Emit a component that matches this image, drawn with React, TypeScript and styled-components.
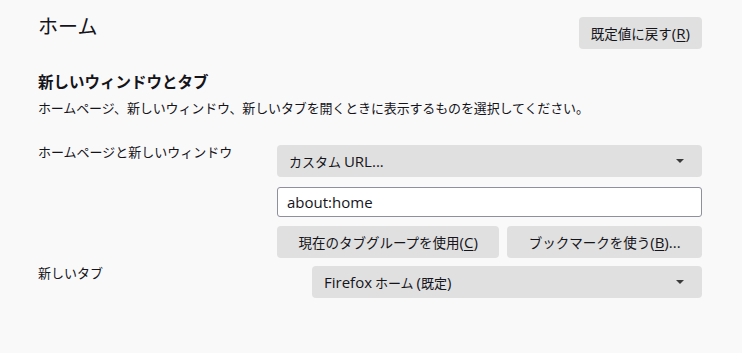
import React from "react";
import styled, { createGlobalStyle } from "styled-components";

const Global = createGlobalStyle`
  html, body { margin: 0; padding: 0; background: #f9f9f9; }
  body {
    font-family: "Open Sans", "Noto Sans CJK JP", sans-serif;
    color: #15141a;
  }
`;

const Page = styled.div`
  width: 742px;
  height: 353px;
  box-sizing: border-box;
  padding: 17px 40px 0 38px;
  background: #f9f9f9;
`;

const Header = styled.div`
  display: flex;
  justify-content: space-between;
  align-items: flex-start;
`;

const Title = styled.h1`
  margin: 0;
  font-size: 20px;
  font-weight: 400;
  line-height: 17px;
  font-family: "Noto Sans CJK JP", sans-serif;
`;

const Latin = styled.span`
  font-family: "Open Sans", sans-serif;
  font-size: 15px;
`;

const Button = styled.button<{ $grow?: boolean }>`
  height: 32px;
  padding: 0 12px;
  border: none;
  border-radius: 4px;
  background: #e0e0e0;
  color: #15141a;
  font-family: "Open Sans", "Noto Sans CJK JP", sans-serif;
  font-size: 13.5px;
  white-space: nowrap;
  ${(p) => (p.$grow ? "flex: 1 1 auto;" : "")}
  u { text-decoration: underline; text-underline-offset: 2px; text-decoration-thickness: 1px; }
`;

const Heading = styled.h2`
  margin: 22px 0 0;
  font-size: 15.5px;
  font-weight: 700;
  line-height: 20px;
  font-family: "Noto Sans CJK JP", sans-serif;
`;

const Desc = styled.p`
  margin: 7px 0 0;
  font-size: 13px;
  letter-spacing: -0.14px;
  line-height: 20px;
  font-family: "Noto Sans CJK JP", sans-serif;
`;

const Row = styled.div<{ $top: number }>`
  display: flex;
  justify-content: space-between;
  align-items: flex-start;
  margin-top: ${(p) => p.$top}px;
`;

const Label = styled.div`
  font-size: 13px;
  line-height: 14px;
  font-family: "Noto Sans CJK JP", sans-serif;
`;

const Controls = styled.div<{ $width: number }>`
  width: ${(p) => p.$width}px;
  display: flex;
  flex-direction: column;
  gap: 9px;
`;

const Select = styled.div`
  height: 32px;
  display: flex;
  align-items: center;
  justify-content: space-between;
  padding: 0 18px 0 12px;
  border-radius: 4px;
  background: #e0e0e0;
  font-size: 13px;
  font-family: "Noto Sans CJK JP", sans-serif;
`;

const Arrow = styled.svg`
  width: 8px;
  height: 4px;
  display: block;
`;

const Input = styled.div`
  height: 30px;
  box-sizing: border-box;
  display: flex;
  align-items: center;
  padding: 0 9px;
  border: 1px solid #8f8f9d;
  border-radius: 3px;
  background: #ffffff;
  font-family: "Open Sans", sans-serif;
  font-size: 15px;
  margin-top: 1px;
`;

const ButtonRow = styled.div`
  display: flex;
  gap: 8px;
`;

const Caret = () => (
  <Arrow viewBox="0 0 8 4">
    <path d="M0 0H8L4 4Z" fill="#3a3a3a" />
  </Arrow>
);

export default function App() {
  return (
    <>
      <Global />
      <Page>
        <Header>
          <Title>ホーム</Title>
          <Button>
            既定値に戻す<Latin>(<u>R</u>)</Latin>
          </Button>
        </Header>
        <Heading>新しいウィンドウとタブ</Heading>
        <Desc>ホームページ、新しいウィンドウ、新しいタブを開くときに表示するものを選択してください。</Desc>
        <Row $top={27}>
          <Label>ホームページと新しいウィンドウ</Label>
          <Controls $width={425}>
            <Select>
              <span>
                カスタム <Latin>URL...</Latin>
              </span>
              <Caret />
            </Select>
            <Input>about:home</Input>
            <ButtonRow>
              <Button $grow>
                現在のタブグループを使用<Latin>(<u>C</u>)</Latin>
              </Button>
              <Button $grow>
                ブックマークを使う<Latin>(<u>B</u>)...</Latin>
              </Button>
            </ButtonRow>
          </Controls>
        </Row>
        <Row $top={8}>
          <Label>新しいタブ</Label>
          <Controls $width={390}>
            <Select>
              <span>
                <Latin>Firefox</Latin> ホーム <Latin>(</Latin>既定<Latin>)</Latin>
              </span>
              <Caret />
            </Select>
          </Controls>
        </Row>
      </Page>
    </>
  );
}
